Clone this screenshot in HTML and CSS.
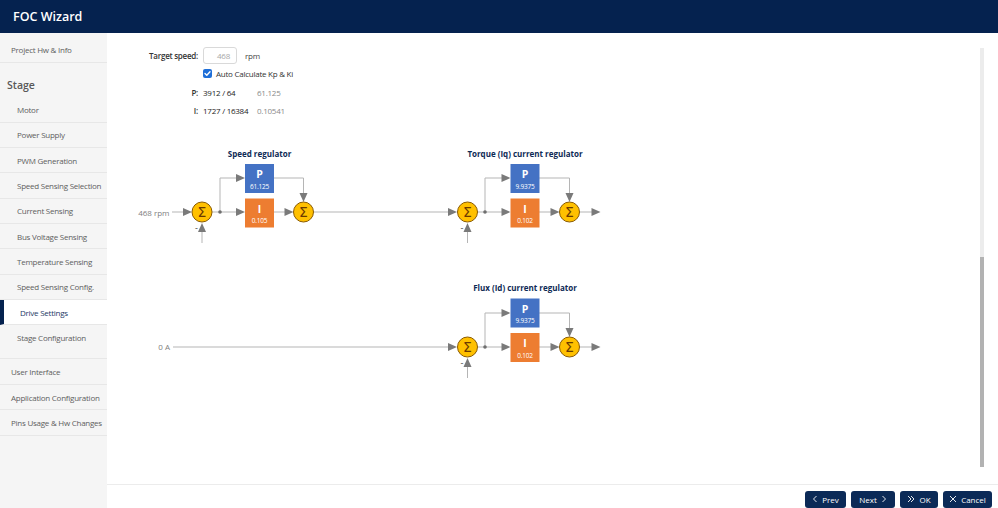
FILE: index.html
```html
<!DOCTYPE html>
<html>
<head>
<meta charset="utf-8">
<link rel="stylesheet" href="styles.css">
</head>
<body>
<div class="app">
  <header class="header"><span class="title">FOC Wizard</span></header>
  <div class="body">
    <nav class="sidebar">
      <div class="nav-item top">Project Hw &amp; Info</div>
      <div class="group">
        <div class="group-title">Stage</div>
        <div class="nav-item sub">Motor</div>
        <div class="nav-item sub">Power Supply</div>
        <div class="nav-item sub">PWM Generation</div>
        <div class="nav-item sub">Speed Sensing Selection</div>
        <div class="nav-item sub">Current Sensing</div>
        <div class="nav-item sub">Bus Voltage Sensing</div>
        <div class="nav-item sub">Temperature Sensing</div>
        <div class="nav-item sub">Speed Sensing Config.</div>
        <div class="nav-item sub active">Drive Settings</div>
        <div class="nav-item sub last">Stage Configuration</div>
      </div>
      <div class="nav-item top">User Interface</div>
      <div class="nav-item top">Application Configuration</div>
      <div class="nav-item top">Pins Usage &amp; Hw Changes</div>
    </nav>
    <main class="main">
      <div class="content">
        <div class="form">
          <div class="row">
            <span class="label">Target speed:</span>
            <span class="input">468</span>
            <span class="unit">rpm</span>
          </div>
          <div class="row">
            <span class="label"></span>
            <span class="checkbox"><svg width="9" height="9" viewBox="0 0 9 9"><path d="M2 4.6 L3.8 6.3 L7 2.8" fill="none" stroke="#fff" stroke-width="1.4" stroke-linecap="round" stroke-linejoin="round"/></svg></span>
            <span class="check-text">Auto Calculate Kp &amp; Ki</span>
          </div>
          <div class="row">
            <span class="label">P:</span>
            <span class="frac">3912 / 64</span>
            <span class="calc">61.125</span>
          </div>
          <div class="row">
            <span class="label">I:</span>
            <span class="frac">1727 / 16384</span>
            <span class="calc">0.10541</span>
          </div>
        </div>
        <svg class="diagram" width="480" height="250" viewBox="130 140 480 250">
          <defs>
            <g id="sum">
              <circle cx="0" cy="0" r="10" fill="#ffc000" stroke="#8a5a00" stroke-width="1"/>
              <text x="0" y="5" class="sigma" text-anchor="middle">Σ</text>
            </g>
            <path id="ar" d="M-9 -4 L0 0 L-9 4 Z" fill="#7a7a7a"/>
            <path id="ad" d="M-4 -9 L0 0 L4 -9 Z" fill="#7a7a7a"/>
            <path id="au" d="M-4 9 L0 0 L4 9 Z" fill="#7a7a7a"/>
          </defs>

          <!-- Speed regulator -->
          <text x="259.5" y="156.5" class="dtitle" text-anchor="middle">Speed regulator</text>
          <text x="169.5" y="215.5" class="dlabel" text-anchor="end">468 rpm</text>
          <g class="wire">
            <line x1="172" y1="212" x2="184" y2="212"/>
            <line x1="202" y1="243" x2="202" y2="228"/>
            <line x1="212" y1="212" x2="237" y2="212"/>
            <polyline points="220,212 220,178 237,178" fill="none"/>
            <polyline points="274,178 303.5,178 303.5,194" fill="none"/>
            <line x1="274" y1="212" x2="285" y2="212"/>
            <line x1="313.5" y1="212" x2="449" y2="212"/>
          </g>
          <use href="#ar" x="192" y="212"/>
          <use href="#au" x="202" y="223"/>
          <use href="#ar" x="245" y="212"/>
          <use href="#ar" x="245" y="178"/>
          <use href="#ad" x="303.5" y="202"/>
          <use href="#ar" x="293.5" y="212"/>
          <use href="#ar" x="457" y="212"/>
          <circle cx="220" cy="212" r="1.8" fill="#6f6f6f"/>
          <text x="196.5" y="231" class="minus" text-anchor="middle">-</text>
          <use href="#sum" x="202" y="212"/>
          <use href="#sum" x="303.5" y="212"/>
          <rect x="245" y="164" width="29" height="29" fill="#4472c4"/>
          <text x="259.5" y="178" class="blet" text-anchor="middle">P</text>
          <text x="259.5" y="188.5" class="bval" text-anchor="middle">61.125</text>
          <rect x="245" y="198.5" width="29" height="29" fill="#ed7d31"/>
          <text x="259.5" y="212.5" class="blet" text-anchor="middle">I</text>
          <text x="259.5" y="223" class="bval" text-anchor="middle">0.105</text>

          <!-- Torque regulator -->
          <text x="525" y="156.5" class="dtitle" text-anchor="middle">Torque (Iq) current regulator</text>
          <g class="wire">
            <line x1="467.5" y1="243" x2="467.5" y2="228"/>
            <line x1="477.5" y1="212" x2="502" y2="212"/>
            <polyline points="485,212 485,178 502,178" fill="none"/>
            <polyline points="539,178 569.5,178 569.5,194" fill="none"/>
            <line x1="539" y1="212" x2="551" y2="212"/>
            <line x1="579.5" y1="212" x2="592" y2="212"/>
          </g>
          <use href="#au" x="467.5" y="223"/>
          <use href="#ar" x="510.5" y="212"/>
          <use href="#ar" x="510.5" y="178"/>
          <use href="#ad" x="569.5" y="202"/>
          <use href="#ar" x="559.5" y="212"/>
          <use href="#ar" x="600.5" y="212"/>
          <circle cx="485" cy="212" r="1.8" fill="#6f6f6f"/>
          <text x="462" y="231" class="minus" text-anchor="middle">-</text>
          <use href="#sum" x="467.5" y="212"/>
          <use href="#sum" x="569.5" y="212"/>
          <rect x="510.5" y="164" width="29" height="29" fill="#4472c4"/>
          <text x="525" y="178" class="blet" text-anchor="middle">P</text>
          <text x="525" y="188.5" class="bval" text-anchor="middle">9.9375</text>
          <rect x="510.5" y="198.5" width="29" height="29" fill="#ed7d31"/>
          <text x="525" y="212.5" class="blet" text-anchor="middle">I</text>
          <text x="525" y="223" class="bval" text-anchor="middle">0.102</text>

          <!-- Flux regulator -->
          <text x="525" y="290.5" class="dtitle" text-anchor="middle">Flux (Id) current regulator</text>
          <text x="170" y="350" class="dlabel" text-anchor="end">0 A</text>
          <g class="wire">
            <line x1="173" y1="347" x2="449" y2="347"/>
            <line x1="467.5" y1="378" x2="467.5" y2="363"/>
            <line x1="477.5" y1="347" x2="502" y2="347"/>
            <polyline points="485,347 485,313 502,313" fill="none"/>
            <polyline points="539,313 569.5,313 569.5,329" fill="none"/>
            <line x1="539" y1="347" x2="551" y2="347"/>
            <line x1="579.5" y1="347" x2="592" y2="347"/>
          </g>
          <use href="#ar" x="457" y="347"/>
          <use href="#au" x="467.5" y="358"/>
          <use href="#ar" x="510.5" y="347"/>
          <use href="#ar" x="510.5" y="313"/>
          <use href="#ad" x="569.5" y="337"/>
          <use href="#ar" x="559.5" y="347"/>
          <use href="#ar" x="600.5" y="347"/>
          <circle cx="485" cy="347" r="1.8" fill="#6f6f6f"/>
          <text x="462" y="366" class="minus" text-anchor="middle">-</text>
          <use href="#sum" x="467.5" y="347"/>
          <use href="#sum" x="569.5" y="347"/>
          <rect x="510.5" y="298.5" width="29" height="29" fill="#4472c4"/>
          <text x="525" y="312.5" class="blet" text-anchor="middle">P</text>
          <text x="525" y="323" class="bval" text-anchor="middle">9.9375</text>
          <rect x="510.5" y="333" width="29" height="29" fill="#ed7d31"/>
          <text x="525" y="347" class="blet" text-anchor="middle">I</text>
          <text x="525" y="357.5" class="bval" text-anchor="middle">0.102</text>
        </svg>
        <div class="scrollbar"><div class="thumb"></div></div>
      </div>
      <footer class="footer">
        <button class="btn"><svg width="6" height="8" viewBox="0 0 6 8"><path d="M4.5 1 L1.5 4 L4.5 7" fill="none" stroke="#fff" stroke-width="0.9"/></svg>Prev</button>
        <button class="btn">Next<svg width="6" height="8" viewBox="0 0 6 8"><path d="M1.5 1 L4.5 4 L1.5 7" fill="none" stroke="#fff" stroke-width="0.9"/></svg></button>
        <button class="btn"><svg width="8" height="8" viewBox="0 0 8 8"><path d="M1 1 L4 4 L1 7 M4 1 L7 4 L4 7" fill="none" stroke="#fff" stroke-width="0.9"/></svg>OK</button>
        <button class="btn"><svg width="8" height="8" viewBox="0 0 8 8"><path d="M1 1 L7 7 M7 1 L1 7" fill="none" stroke="#fff" stroke-width="0.9"/></svg>Cancel</button>
      </footer>
    </main>
  </div>
</div>
</body>
</html>
```

FILE: styles.css
```css
* { box-sizing: border-box; }
html, body { margin: 0; padding: 0; }
body {
  width: 998px;
  height: 508px;
  overflow: hidden;
  font-family: "Open Sans", "Noto Sans", sans-serif;
  color: #333;
  background: #fff;
}
.app { display: flex; flex-direction: column; height: 508px; }
.header {
  height: 33px;
  flex: none;
  background: #05224f;
  display: flex;
  align-items: center;
  padding-left: 13px;
}
.title { color: #fff; font-size: 12.5px; font-weight: 600; }
.body { flex: 1; display: flex; min-height: 0; }

.sidebar {
  width: 107px;
  flex: none;
  background: #f5f5f5;
  padding-top: 4.5px;
}
.nav-item {
  height: 25.3px;
  display: flex;
  align-items: center;
  font-size: 8px;
  letter-spacing: -0.25px;
  color: #5e5e5e;
  white-space: nowrap;
  border-bottom: 1px solid #e7e7e7;
}
.nav-item.top { padding-left: 11px; height: 25.5px; }
.nav-item.sub { padding-left: 17px; }
.nav-item.sub.last { border-bottom: none; }
.nav-item.active {
  background: #fff;
  border-left: 4px solid #05224f;
  padding-left: 16px;
  color: #1d3866;
}
.group { padding-bottom: 8px; border-bottom: 1px solid #e7e7e7; }
.group-title {
  height: 34.5px;
  padding: 15px 0 0 7px;
  font-size: 10.5px;
  font-weight: 600;
  color: #585858;
  line-height: 14px;
}

.main { flex: 1; display: flex; flex-direction: column; min-width: 0; }
.content { flex: 1; position: relative; padding-top: 13px; overflow: hidden; }
.form { display: flex; flex-direction: column; }
.row {
  height: 18.5px;
  display: flex;
  align-items: center;
  font-size: 8px;
  letter-spacing: -0.25px;
  color: #333;
}
.label {
  width: 91px;
  text-align: right;
  margin-right: 5px;
  font-weight: 600;
  color: #333;
}
.input {
  width: 34px;
  height: 17px;
  border: 1px solid #d9d9d9;
  border-radius: 3px;
  text-align: right;
  padding-right: 6px;
  line-height: 15px;
  color: #a8a8a8;
}
.unit { margin-left: 8px; color: #444; }
.checkbox {
  width: 9px;
  height: 9px;
  border-radius: 2px;
  background: #1f6fd8;
  display: flex;
  margin-right: 4px;
}
.check-text { color: #333; }
.frac { width: 54px; color: #222; }
.calc { color: #8a8a8a; }

.diagram { display: block; margin: 20px 0 0 23px; overflow: visible; }
.wire line, .wire polyline { stroke: #b5b5b5; stroke-width: 1; }
.dtitle { font-size: 8px; font-weight: 700; fill: #0e2a55; font-family: "Open Sans", sans-serif; }
.dlabel { font-size: 8px; fill: #808080; font-family: "Open Sans", sans-serif; }
.minus { font-size: 9px; fill: #444; font-family: "Open Sans", sans-serif; }
.sigma { font-size: 14px; fill: #6b3a00; font-family: "DejaVu Sans", sans-serif; }
.blet { font-size: 10.5px; font-weight: 700; fill: #fff; font-family: "Open Sans", sans-serif; }
.bval { font-size: 6.5px; fill: #fff; font-family: "Open Sans", sans-serif; letter-spacing: -0.2px; }

.scrollbar {
  position: absolute;
  left: 873px;
  top: 15px;
  width: 4px;
  height: 419px;
  background: #ececec;
  display: flex;
  flex-direction: column;
  justify-content: flex-end;
}
.thumb { height: 210px; background: #b2b2b2; }

.footer {
  height: 24px;
  flex: none;
  border-top: 1px solid #ececec;
  display: flex;
  justify-content: flex-end;
  align-items: flex-start;
  gap: 5px;
  padding: 5.5px 6px 0 0;
}
.btn {
  height: 17px;
  border: none;
  border-radius: 3px;
  background: #0b2a57;
  color: #fff;
  font-family: "Open Sans", sans-serif;
  font-size: 8px;
  display: flex;
  align-items: center;
  justify-content: center;
  gap: 4px;
  padding: 0;
}
.btn:nth-child(1) { width: 41px; }
.btn:nth-child(2) { width: 44px; }
.btn:nth-child(3) { width: 38px; }
.btn:nth-child(4) { width: 49px; }
```
